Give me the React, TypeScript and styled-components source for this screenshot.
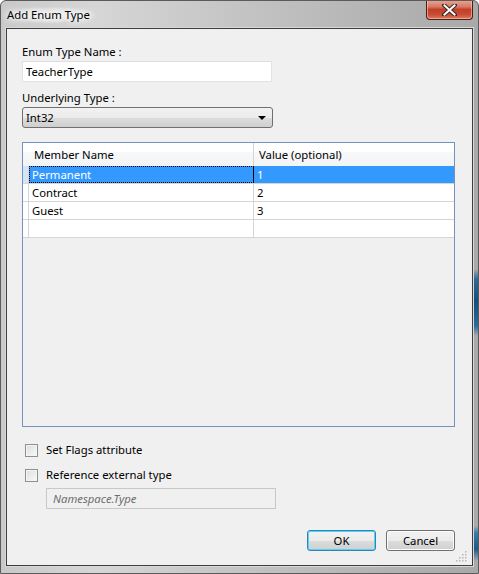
import React from "react";
import styled, { createGlobalStyle } from "styled-components";

const Global = createGlobalStyle`
  html, body { margin: 0; padding: 0; background: #ffffff; }
  body { font-family: "Noto Sans", "Liberation Sans", sans-serif; font-size: 12px; color: #000; }
  * { box-sizing: border-box; }
`;

const FONT = `"Noto Sans", "Liberation Sans", sans-serif`;
const FS = "11.3px";

const Window = styled.div`
  position: relative;
  width: 479px;
  height: 574px;
  display: flex;
  flex-direction: column;
  border: 1px solid #5b5b5b;
  border-radius: 6px 6px 0 0;
  overflow: hidden;
  background:
    linear-gradient(to bottom, transparent 268px, #2c6b98 278px, #174f7c 300px, #2c6b98 325px, transparent 335px) right top / 6px 100% no-repeat,
    linear-gradient(to bottom, transparent 525px, #3a7aa8 532px, #1c5a88 548px, transparent 560px) right top / 6px 100% no-repeat,
    linear-gradient(to right, #c9c9c9 0%, #d6d6d6 20%, #c4c4c4 50%, #b3b3b3 80%, #a9a9a9 100%);
`;

const TitleBar = styled.div`
  height: 27px;
  flex: 0 0 27px;
  display: flex;
  align-items: flex-start;
  padding-left: 6px;
`;

const Title = styled.div`
  font-family: ${FONT};
  font-size: ${FS};
  line-height: 16px;
  margin-top: 6px;
  padding: 0 6px 0 0;
  color: #000;
  text-shadow: 0 0 6px #fff, 0 0 8px #fff, 0 0 10px #f4f4f4;
  background: radial-gradient(ellipse at center, rgba(255,255,255,0.7) 0%, rgba(255,255,255,0.3) 55%, rgba(255,255,255,0) 75%);
`;

const CloseButton = styled.div`
  margin-left: auto;
  margin-right: 5px;
  margin-top: -1px;
  width: 47px;
  height: 20px;
  border: 1px solid #4b1e16;
  border-top: none;
  border-radius: 0 0 4px 4px;
  background: linear-gradient(to bottom, #e9a897 0%, #d87a66 35%, #c2402a 50%, #c84a33 75%, #dc7a5e 100%);
  box-shadow: inset 0 0 0 1px rgba(255,210,200,0.55);
  display: flex;
  align-items: center;
  justify-content: center;
`;

const Client = styled.div`
  flex: 1;
  margin: 0 5px 7px 5px;
  border: 1px solid #3e3e3e;
  box-shadow: 0 0 0 1px #d8d8d8;
  background: #f0f0f0;
  padding: 15px 16px 0 15px;
  display: flex;
  flex-direction: column;
  position: relative;
`;

const Label = styled.div<{ $top?: number }>`
  font-family: ${FONT};
  font-size: ${FS};
  line-height: 16px;
  margin-top: ${(p) => p.$top ?? 0}px;
  margin-bottom: 1px;
  color: #000;
`;

const TextBox = styled.div<{ $disabled?: boolean; $width: number }>`
  width: ${(p) => p.$width}px;
  height: 21px;
  border: 1px solid ${(p) => (p.$disabled ? "#c8c8c8" : "#e2e3ea")};
  border-top-color: ${(p) => (p.$disabled ? "#c8c8c8" : "#dcdde2")};
  background: ${(p) => (p.$disabled ? "#f0f0f0" : "#ffffff")};
  font-family: ${FONT};
  font-size: ${FS};
  line-height: 19px;
  padding-left: ${(p) => (p.$disabled ? 6 : 3)}px;
  color: ${(p) => (p.$disabled ? "#6d6d6d" : "#000")};
  font-style: ${(p) => (p.$disabled ? "italic" : "normal")};
`;

const Combo = styled.div`
  width: 251px;
  height: 21px;
  border: 1px solid #707070;
  border-radius: 3px;
  background: linear-gradient(to bottom, #f2f2f2 0%, #ebebeb 50%, #dddddd 50%, #cfcfcf 100%);
  display: flex;
  align-items: center;
  padding: 0 6px 0 3px;
  font-family: ${FONT};
  font-size: ${FS};
`;

const ComboText = styled.span`
  flex: 1;
  line-height: 19px;
`;

const Arrow = styled.span`
  width: 0;
  height: 0;
  border-left: 4px solid transparent;
  border-right: 4px solid transparent;
  border-top: 4px solid #000;
`;

const GridGroup = styled.div`
  margin-top: 14px;
  width: 433px;
  height: 285px;
  border: 1px solid #7393bd;
  display: flex;
  flex-direction: column;
`;

const HeaderRow = styled.div`
  display: grid;
  grid-template-columns: 6px 225px 200px;
  height: 23px;
  background: linear-gradient(to bottom, #ffffff 0%, #ffffff 38%, #f7f8fa 38%, #f3f4f6 100%);
`;

const HeaderCell = styled.div<{ $divider?: boolean }>`
  font-family: ${FONT};
  font-size: ${FS};
  line-height: 23px;
  padding-left: 5px;
  border-right: ${(p) => (p.$divider ? "1px solid #d5d5d5" : "none")};
  white-space: nowrap;
  overflow: hidden;
`;

const Row = styled.div`
  display: grid;
  grid-template-columns: 6px 225px 200px;
  height: 18px;
  border-bottom: 1px solid #d5d5d5;
`;

const RowHeader = styled.div<{ $selected?: boolean }>`
  background: ${(p) => (p.$selected ? "#d3e6f7" : "#ffffff")};
  border-right: 1px solid #d5d5d5;
`;

const Cell = styled.div<{ $selected?: boolean; $focus?: boolean; $divider?: boolean }>`
  background: ${(p) => (p.$selected ? "#3399ff" : "#ffffff")};
  color: ${(p) => (p.$selected ? "#ffffff" : "#000")};
  font-family: ${FONT};
  font-size: ${FS};
  line-height: 17px;
  padding-left: 3px;
  border-right: ${(p) => (p.$divider ? `1px solid ${p.$focus ? "#000" : "#d5d5d5"}` : "none")};
  outline: ${(p) => (p.$focus ? "1px dotted #000" : "none")};
  outline-offset: -1px;
  white-space: nowrap;
`;

const CheckRow = styled.div<{ $top: number }>`
  display: flex;
  align-items: center;
  margin-top: ${(p) => p.$top}px;
  padding-left: 3px;
  height: 16px;
`;

const CheckBox = styled.div`
  width: 13px;
  height: 13px;
  border: 1px solid #8e8f8f;
  background: linear-gradient(135deg, #dcdcdc 0%, #eeeeee 60%, #fbfbfb 100%);
  box-shadow: inset 0 0 0 1px #f4f4f4;
  margin-right: 8px;
`;

const CheckLabel = styled.span`
  font-family: ${FONT};
  font-size: ${FS};
  line-height: 16px;
`;

const Indent = styled.div`
  margin-top: 5px;
  padding-left: 24px;
`;

const ButtonBar = styled.div`
  display: flex;
  justify-content: flex-end;
  gap: 10px;
  margin-top: 21px;
  width: 433px;
`;

const Button = styled.div<{ $default?: boolean }>`
  width: 69px;
  height: 21px;
  border: 1px solid ${(p) => (p.$default ? "#3c7fb1" : "#707070")};
  border-radius: 3px;
  background: linear-gradient(to bottom, #f2f2f2 0%, #ebebeb 50%, #dddddd 50%, #cfcfcf 100%);
  box-shadow: ${(p) => (p.$default ? "inset 0 0 0 1px #48d8fb" : "inset 0 0 0 1px #fcfcfc")};
  font-family: ${FONT};
  font-size: ${FS};
  line-height: 19px;
  text-align: center;
`;

const Grip = styled.svg`
  position: absolute;
  right: 5px;
  bottom: 3px;
`;

const rows = [
  { name: "Permanent", value: "1", selected: true },
  { name: "Contract", value: "2" },
  { name: "Guest", value: "3" },
  { name: "", value: "" },
];

export default function App() {
  return (
    <>
      <Global />
      <Window>
        <TitleBar>
          <Title>Add Enum Type</Title>
          <CloseButton>
            <svg width="15" height="12" viewBox="0 0 15 12">
              <path d="M2 1 L13 11 M13 1 L2 11" stroke="#3a2a28" strokeWidth="4" strokeLinecap="square" />
              <path d="M2.5 1.5 L12.5 10.5 M12.5 1.5 L2.5 10.5" stroke="#ffffff" strokeWidth="2" strokeLinecap="square" />
            </svg>
          </CloseButton>
        </TitleBar>
        <Client>
          <Label>Enum Type Name :</Label>
          <TextBox $width={250}>TeacherType</TextBox>
          <Label $top={8}>Underlying Type :</Label>
          <Combo>
            <ComboText>Int32</ComboText>
            <Arrow />
          </Combo>
          <GridGroup>
            <HeaderRow>
              <HeaderCell />
              <HeaderCell $divider>Member Name</HeaderCell>
              <HeaderCell>Value (optional)</HeaderCell>
            </HeaderRow>
            {rows.map((r, i) => (
              <Row key={i}>
                <RowHeader $selected={r.selected} />
                <Cell $selected={r.selected} $focus={r.selected} $divider>
                  {r.name}
                </Cell>
                <Cell $selected={r.selected}>{r.value}</Cell>
              </Row>
            ))}
          </GridGroup>
          <CheckRow $top={15}>
            <CheckBox />
            <CheckLabel>Set Flags attribute</CheckLabel>
          </CheckRow>
          <CheckRow $top={9}>
            <CheckBox />
            <CheckLabel>Reference external type</CheckLabel>
          </CheckRow>
          <Indent>
            <TextBox $width={230} $disabled>
              Namespace.Type
            </TextBox>
          </Indent>
          <ButtonBar>
            <Button $default>OK</Button>
            <Button>Cancel</Button>
          </ButtonBar>
          <Grip width="11" height="11" viewBox="0 0 11 11">
            {[
              [9, 1], [9, 4], [6, 4], [9, 7], [6, 7], [3, 7], [9, 10], [6, 10], [3, 10], [0, 10],
            ].map(([x, y], i) => (
              <rect key={i} x={x} y={y - 1} width="1.5" height="1.5" fill="#b8b8b8" />
            ))}
          </Grip>
        </Client>
      </Window>
    </>
  );
}
